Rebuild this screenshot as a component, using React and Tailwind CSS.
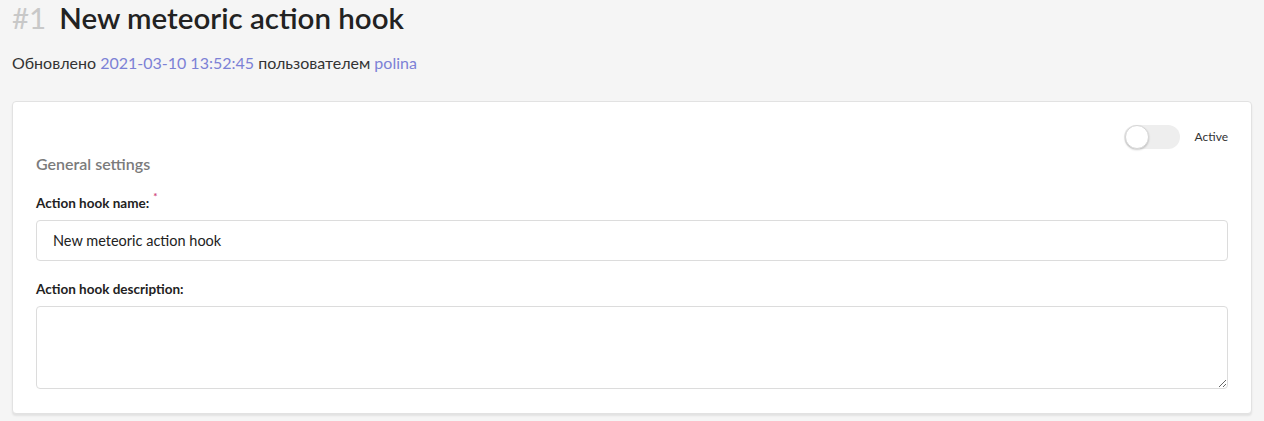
export default function App() {
  const font = { fontFamily: "Lato, 'Noto Sans', sans-serif" };
  return (
    <div className="min-h-[421px] w-full bg-[#f5f5f5] px-3 pt-[1px]" style={font}>
      <h1 className="flex items-baseline gap-[13px] h-[34px] text-[29.5px] leading-[34px]">
        <span className="text-[#c8c8c8] font-normal">#1</span>
        <span className="text-[#222] font-semibold">New meteoric action hook</span>
      </h1>
      <p className="mt-[17px] text-[16px] leading-[22px] text-[#333]">
        Обновлено <a className="text-[#7c81d6]">2021-03-10 13:52:45</a> пользователем{" "}
        <a className="text-[#7c81d6]">polina</a>
      </p>
      <div className="mt-[27px] w-[1240px] rounded-[4px] border border-[#e2e2e2] bg-white px-[23px] pt-[23px] pb-[24px] shadow-[0_2px_2px_rgba(0,0,0,0.08)]">
        <div className="flex items-center justify-end h-[24px]">
          <div className="relative h-[24px] w-[56px] rounded-full bg-[#eeeeee]">
            <div className="absolute left-[1px] top-0 h-[24px] w-[24px] rounded-full border border-[#d6d6d6] bg-white shadow-[0_1px_2px_rgba(0,0,0,0.2)]" />
          </div>
          <span className="ml-[15px] text-[12px] text-[#333]">Active</span>
        </div>
        <div className="mt-[5px] text-[16px] font-semibold leading-[20px] text-[#7b7b7b]">General settings</div>
        <div className="mt-[20px] flex items-start text-[13.5px] font-bold leading-[18px] text-[#222]">
          Action hook name:<span className="ml-[4px] text-[10px] leading-[10px] text-[#d0457a] -mt-[3px]">*</span>
        </div>
        <div className="mt-[8px] h-[41px] w-full rounded-[4px] border border-[#dcdcdc] bg-white px-4 flex items-center text-[14.5px] text-[#222]">
          New meteoric action hook
        </div>
        <div className="mt-[19px] text-[13.5px] font-bold leading-[18px] text-[#222]">Action hook description:</div>
        <textarea className="mt-[8px] block h-[83px] w-full resize-y rounded-[4px] border border-[#dcdcdc] bg-white outline-none" />
      </div>
    </div>
  );
}
